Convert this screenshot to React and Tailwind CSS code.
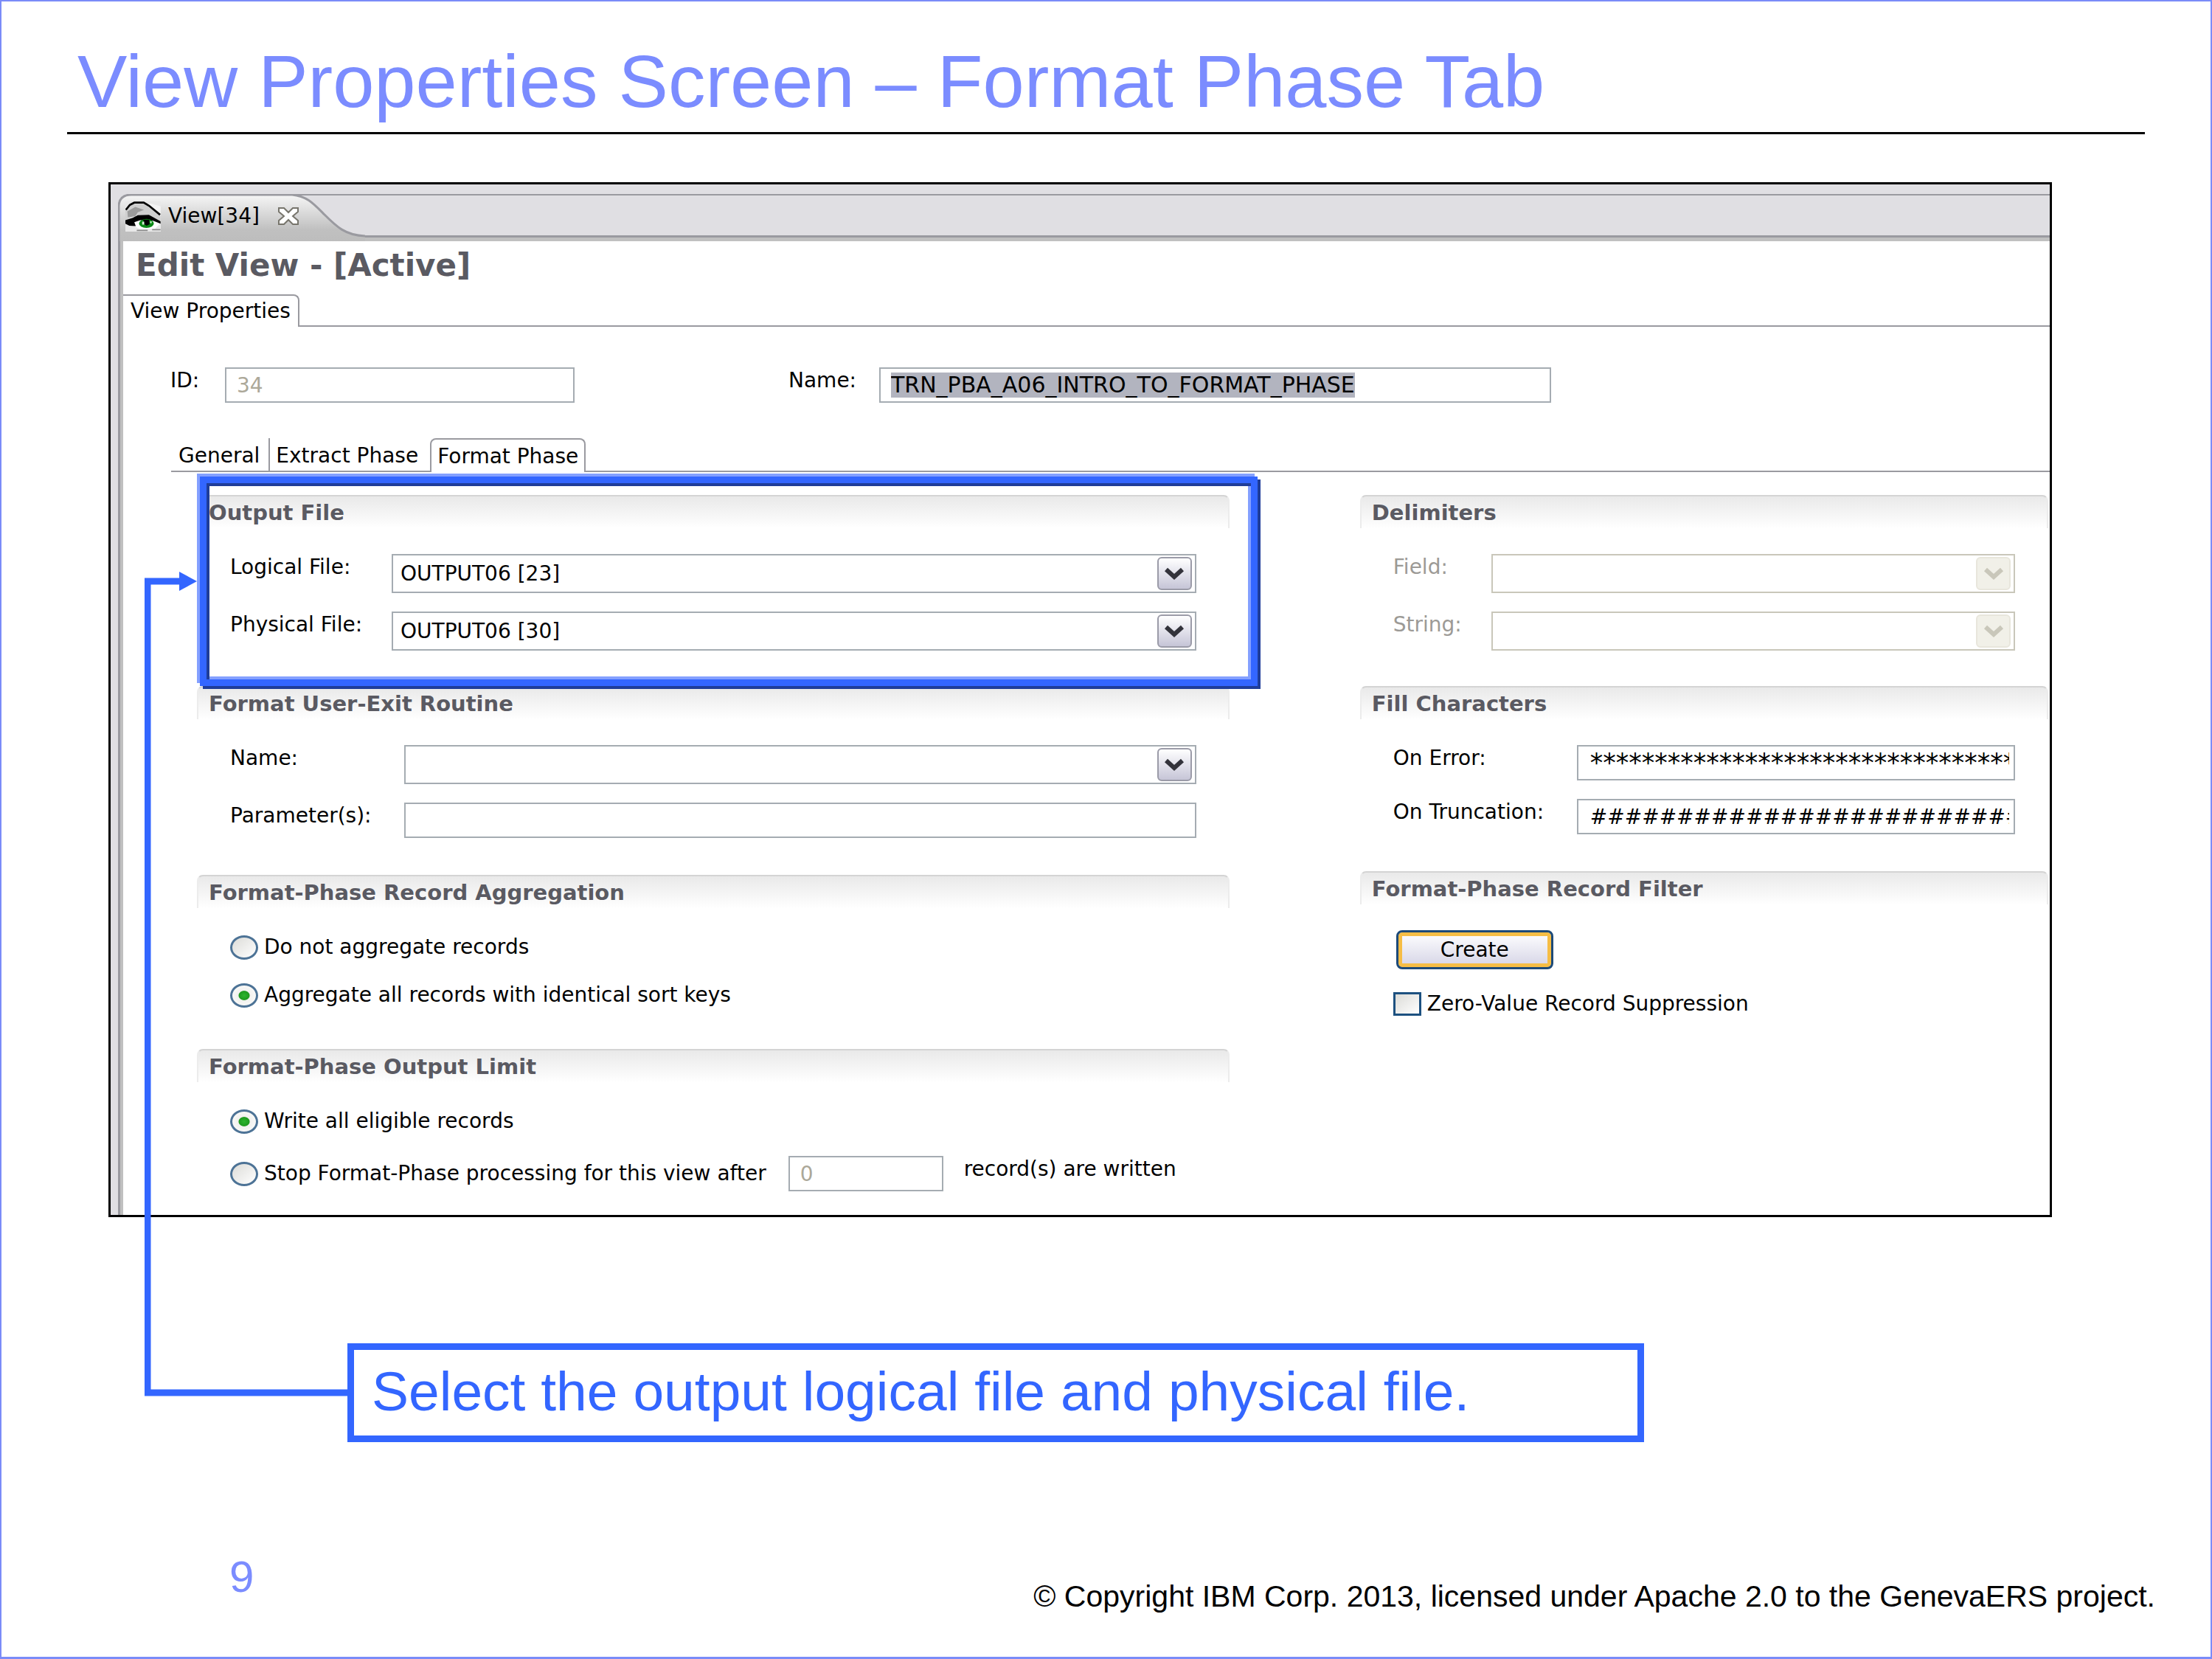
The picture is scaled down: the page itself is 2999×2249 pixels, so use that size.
import React, { useId } from "react";

const fieldBorder = "border-2 border-[#a5acb2] bg-white";

function SectionTitle({ children }) {
  return (
    <h3 className="h-[45px] rounded-t-lg border-t-2 border-x-2 border-t-[#d4d4d4] border-x-[#ececec] bg-linear-to-b from-[#e9e9e9] to-white pt-1 pl-3.5 text-[29px] leading-9 font-bold text-[#5a5a62]">
      {children}
    </h3>
  );
}

function Section({ title, className = "", bodyClass = "gap-[25px]", children }) {
  return (
    <section className={`relative ${className}`}>
      <SectionTitle>{title}</SectionTitle>
      <div className={`flex flex-col pt-[35px] px-[45px] ${bodyClass}`}>{children}</div>
    </section>
  );
}

function Row({ label, labelWidth, disabled, children }) {
  const id = useId();
  return (
    <div className="flex items-start">
      <label htmlFor={id} className={`shrink-0 ${labelWidth} ${disabled ? "text-[#9c9a96]" : ""}`}>
        {label}
      </label>
      {React.cloneElement(children, { id })}
    </div>
  );
}

function Select({ id, value = "", disabled }) {
  return (
    <div className="relative min-w-0 flex-1">
      <select
        id={id}
        disabled={disabled}
        defaultValue={value}
        className={`block h-[53px] w-full appearance-none rounded-none border-2 bg-white pl-2.5 pr-16 opacity-100 ${
          disabled ? "border-[#c9c7ba]" : "border-[#a5acb2]"
        }`}
      >
        <option value={value}>{value}</option>
      </select>
      <span
        className={`pointer-events-none absolute top-1 right-1.5 flex h-[45px] w-[47px] items-center justify-center rounded-md border-2 ${
          disabled
            ? "border-[#e8e6dc] bg-[#f1f0e8] text-[#c9c7ba]"
            : "border-[#9b9ba8] bg-linear-to-b from-white to-[#c6c5d7] text-[#33333b]"
        }`}
      >
        <svg viewBox="0 0 28 18" className="h-[18px] w-[28px]" fill="none" stroke="currentColor" strokeWidth="6">
          <path d="M3 3 L14 13 L25 3" />
        </svg>
      </span>
    </div>
  );
}

function TextInput({ id, value = "", className = "w-full px-3.5", ...rest }) {
  return (
    <input id={id} type="text" defaultValue={value} className={`h-12 min-w-0 ${fieldBorder} ${className}`} {...rest} />
  );
}

function Radio({ name, label, checked }) {
  return (
    <label className="flex items-center gap-2">
      <input
        type="radio"
        name={name}
        defaultChecked={checked}
        className="h-[33px] w-[38px] appearance-none rounded-[50%] border-[3px] border-[#4d7396] bg-linear-to-br from-[#dcdcd8] to-white checked:bg-[radial-gradient(ellipse_at_center,#2db52d_0,#1f9a1f_7px,#f1f1ee_8px,#ffffff_100%)]"
      />
      <span>{label}</span>
    </label>
  );
}

function EyeIcon() {
  return (
    <svg viewBox="0 0 143 122" className="h-[41px] w-[48px]" aria-hidden="true">
      <rect width="143" height="122" fill="#e8e8e8" />
      <path d="M0 30 L20 12 L75 8 L110 34 L142 60 L142 80 L90 55 L40 56 L0 78Z" fill="#cfcfcf" />
      <path d="M8 40 L40 22 L75 34 L50 44 L40 60 L10 64Z" fill="#9b9b9b" />
      <path d="M84 12 L142 52 L142 20 L100 8Z" fill="#f4f4f4" />
      <path d="M2 34 L18 14 L36 5 L74 5 L96 18 L140 54" fill="none" stroke="#000" strokeWidth="8" />
      <path d="M18 92 L50 72 L110 72 L140 90 L120 110 L60 112Z" fill="#fff" />
      <path d="M0 76 L30 66 L50 56 L95 54 L142 80 L142 90 L112 78 L60 76 L36 84 L42 100 L16 98 L0 90Z" fill="#000" />
      <ellipse cx="85" cy="89" rx="30" ry="18" fill="#0b8a16" />
      <path d="M72 74 H96 L98 92 L86 98 L76 92Z" fill="#000" />
      <path d="M68 82 h8 v12 h-8z M100 80 h6 v8 h-6z" fill="#d7f3d7" />
      <path d="M46 117 H90 M108 114 H142" stroke="#8a8a8a" strokeWidth="5" />
    </svg>
  );
}

function CloseIcon() {
  return (
    <svg viewBox="0 0 30 26" className="h-[26px] w-[30px]" aria-hidden="true">
      <path
        d="M2 2 H9 L15 8 L21 2 H28 V7 L21 13 L28 19 V24 H21 L15 18 L9 24 H2 V19 L9 13 L2 7Z"
        fill="#fff"
        stroke="#77756c"
        strokeWidth="2"
      />
    </svg>
  );
}

function EditorTab() {
  return (
    <div className="flex h-16">
      <div className="relative w-[335px] shrink-0">
        <svg viewBox="0 0 335 64" className="absolute inset-0 h-full w-full" aria-hidden="true">
          <defs>
            <linearGradient id="tabFill" x1="0" y1="0" x2="0" y2="1">
              <stop offset="0" stopColor="#f6f6f6" />
              <stop offset="0.75" stopColor="#c0c0c0" />
              <stop offset="1" stopColor="#bdbdbd" />
            </linearGradient>
          </defs>
          <path
            d="M1 64 V16 Q2 1 18 1 H236 C256 3 264 12 280 28 C296 44 308 56 335 57 V64Z"
            fill="url(#tabFill)"
          />
          <path
            d="M1 64 V16 Q2 1 18 1 H236 C256 3 264 12 280 28 C296 44 308 56 335 57"
            fill="none"
            stroke="#9a9aa0"
            strokeWidth="3"
          />
          <path d="M236 1 H335" stroke="#9a9aa0" strokeWidth="2" />
        </svg>
        <div className="relative flex h-full items-center pl-2.5 pb-1">
          <EyeIcon />
          <span className="pl-2.5">View[34]</span>
          <button type="button" aria-label="Close" className="ml-6">
            <CloseIcon />
          </button>
        </div>
      </div>
      <div className="flex flex-1 flex-col justify-end border-t-2 border-[#9a9aa0]">
        <div className="h-2 border-t-[3px] border-[#9a9aa0] bg-[#c0c0c0]" />
      </div>
    </div>
  );
}

function FormatPhasePanel() {
  return (
    <div className="grid grid-cols-[3fr_2fr] gap-x-[177px] pt-[31px] pr-0.5 pl-[35px]">
      <div>
        <Section title="Output File">
          <Row label="Logical File:" labelWidth="w-[219px]">
            <Select value="OUTPUT06 [23]" />
          </Row>
          <Row label="Physical File:" labelWidth="w-[219px]">
            <Select value="OUTPUT06 [30]" />
          </Row>
          <div className="pointer-events-none absolute -top-[25px] -right-[38px] -bottom-[48px] left-1 z-10 border-[9px] border-[#3366ff] shadow-[-4px_-4px_0_#84a0ff,4px_4px_0_#1f3d99,inset_4px_4px_0_#1f3d99,inset_-4px_-4px_0_#84a0ff]" />
        </Section>
        <Section title="Format User-Exit Routine" className="mt-12">
          <Row label="Name:" labelWidth="w-[236px]">
            <Select />
          </Row>
          <Row label="Parameter(s):" labelWidth="w-[236px]">
            <TextInput />
          </Row>
        </Section>
        <Section title="Format-Phase Record Aggregation" className="mt-[50px]" bodyClass="gap-[29px]">
          <Radio name="aggregation" label="Do not aggregate records" />
          <Radio name="aggregation" label="Aggregate all records with identical sort keys" checked />
        </Section>
        <Section title="Format-Phase Output Limit" className="mt-[55px]" bodyClass="gap-[29px]">
          <Radio name="limit" label="Write all eligible records" checked />
          <div className="flex items-start">
            <div className="flex h-12 items-center">
              <Radio name="limit" label="Stop Format-Phase processing for this view after" />
            </div>
            <TextInput value="0" disabled aria-label="Record limit" className="ml-[30px] w-[210px] px-3.5 text-[#aca899]" />
            <span className="pl-7">record(s) are written</span>
          </div>
        </Section>
      </div>
      <div>
        <Section title="Delimiters">
          <Row label="Field:" labelWidth="w-[133px]" disabled>
            <Select disabled />
          </Row>
          <Row label="String:" labelWidth="w-[133px]" disabled>
            <Select disabled />
          </Row>
        </Section>
        <Section title="Fill Characters" className="mt-12">
          <Row label="On Error:" labelWidth="w-[249px]">
            <TextInput value={"*".repeat(33)} className="w-full pr-1.5 pl-4 text-[35px]" />
          </Row>
          <Row label="On Truncation:" labelWidth="w-[249px]">
            <TextInput value={"#".repeat(25)} className="w-full pr-1.5 pl-4" />
          </Row>
        </Section>
        <Section title="Format-Phase Record Filter" className="mt-[50px]" bodyClass="gap-[29px]">
          <button
            type="button"
            className="ml-1 h-[53px] w-[213px] rounded-lg border-[3px] border-[#1d4a78] bg-linear-to-b from-white to-[#d5d4e6] shadow-[inset_0_0_0_5px_#f6bd45]"
          >
            Create
          </button>
          <label className="flex items-center gap-2">
            <input
              type="checkbox"
              className="h-8 w-[38px] appearance-none border-[3px] border-[#1d5180] bg-linear-to-br from-[#dcdcd8] to-white"
            />
            <span>Zero-Value Record Suppression</span>
          </label>
        </Section>
      </div>
    </div>
  );
}

function Editor() {
  return (
    <div className="mr-[215px] ml-[145px] border-[3px] border-black bg-[#e0dfe3] pt-[13px] pl-2.5 font-['DejaVu_Sans',sans-serif] text-[28px] leading-9 text-black">
      <EditorTab />
      <div className="border-l-[3px] border-[#9a9aa0]">
        <div className="border-l-4 border-[#c0c0c0] bg-white pb-8">
          <h2 className="pt-1.5 pl-[17px] text-[42px] leading-[54px] font-bold text-[#5a5a62]">Edit View - [Active]</h2>
          <div className="mt-3 flex" role="tablist">
            <button
              type="button"
              role="tab"
              aria-selected="true"
              className="h-[44px] rounded-tr-lg border-t-2 border-r-2 border-[#9a9aa0] pr-2.5 pl-2.5"
            >
              View Properties
            </button>
            <div className="flex-1 border-b-2 border-[#9a9aa0]" />
          </div>
          <div className="mt-[55px] flex items-start pl-[64px]">
            <label htmlFor="view-id" className="w-[74px]">
              ID:
            </label>
            <TextInput id="view-id" value="34" disabled className="w-[474px] px-3.5 text-[#aca899]" />
            <label htmlFor="view-name" className="ml-[290px] w-[123px]">
              Name:
            </label>
            <div className={`flex h-12 w-[911px] items-center pl-3.5 ${fieldBorder}`}>
              <input
                id="view-name"
                type="text"
                defaultValue="TRN_PBA_A06_INTRO_TO_FORMAT_PHASE"
                className="h-[34px] [field-sizing:content] bg-[#b2b4bf] text-[30px]"
              />
            </div>
          </div>
          <div className="pl-[65px]">
            <div className="mt-12 flex items-stretch" role="tablist">
              <button type="button" role="tab" className="h-[46px] border-r-2 border-b-2 border-[#9a9aa0] pt-1 pr-3 pl-2.5">
                General
              </button>
              <button type="button" role="tab" className="border-b-2 border-[#9a9aa0] pt-1 pr-4 pl-2">
                Extract Phase
              </button>
              <button
                type="button"
                role="tab"
                aria-selected="true"
                className="rounded-t-lg border-x-2 border-t-2 border-[#9a9aa0] px-2 pt-0.5"
              >
                Format Phase
              </button>
              <div className="flex-1 border-b-2 border-[#9a9aa0]" />
            </div>
            <FormatPhasePanel />
          </div>
        </div>
      </div>
    </div>
  );
}

function Connector() {
  return (
    <svg viewBox="0 0 277 1118" className="pointer-events-none absolute top-[528px] left-[194px] h-[1118px] w-[277px]" aria-hidden="true">
      <path d="M277 1113 H4 V13 H50" fill="none" stroke="#3366ff" strokeWidth="9" />
      <path d="M47 0 L71 13 L47 26Z" fill="#3366ff" />
    </svg>
  );
}

export default function App() {
  return (
    <main className="flex min-h-screen flex-col border-2 border-b-[3px] border-[#7b8cf8] bg-white font-['Liberation_Sans',Arial,sans-serif]">
      <header className="mx-[89px] border-b-[3px] border-black pt-[58px] pb-[18px] pl-3.5">
        <h1 className="text-[101px] leading-none text-[#7b8cff]">View Properties Screen – Format Phase Tab</h1>
      </header>
      <div className="relative mt-[65px]">
        <Editor />
        <p className="mt-[171px] mr-[768px] ml-[469px] border-[9px] border-[#3366ff] pt-[19px] pb-[22px] pl-6 text-[75px] leading-none text-[#3366ff]">
          Select the output logical file and physical file.
        </p>
        <Connector />
      </div>
      <footer className="mt-auto flex items-start justify-between pr-[75px] pb-[61px] pl-[309px]">
        <span className="text-[60px] leading-none text-[#7b8cff]">9</span>
        <span className="pt-[36px] text-[41px] leading-none text-black">
          © Copyright IBM Corp. 2013, licensed under Apache 2.0 to the GenevaERS project.
        </span>
      </footer>
    </main>
  );
}
